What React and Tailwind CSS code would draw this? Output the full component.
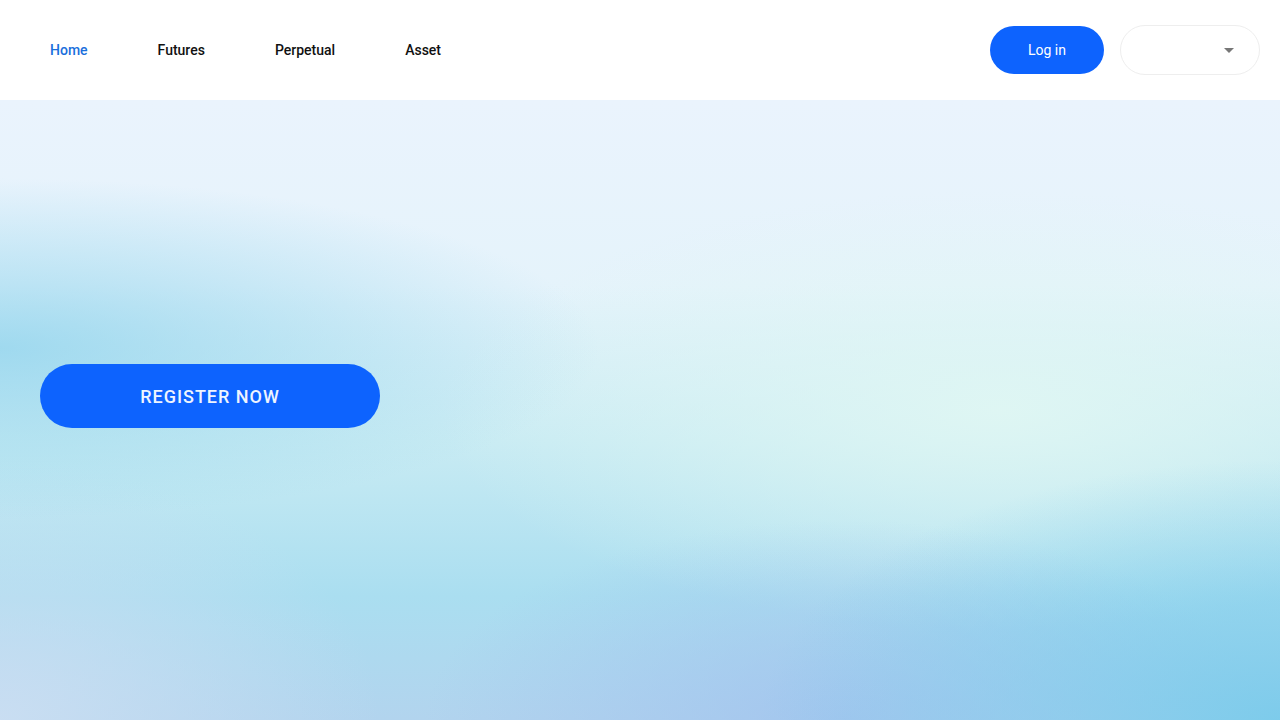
import { useState } from 'react';

const links = ['Home', 'Futures', 'Perpetual', 'Asset'];

export default function App() {
  const [active] = useState('Home');
  return (
    <div className="h-screen flex flex-col font-['Roboto',sans-serif] overflow-hidden">
      <header className="h-[100px] shrink-0 bg-white flex items-center justify-between pl-[50px] pr-5">
        <nav className="flex items-center gap-[70px]">
          {links.map(l => (
            <a key={l} href="#"
              className={`text-[14px] font-medium ${l === active ? 'text-[#1a6fdc]' : 'text-[#111]'}`}>
              {l}
            </a>
          ))}
        </nav>
        <div className="flex items-center gap-4">
          <button className="w-[114px] h-[48px] rounded-full bg-[#0d63fe] text-white text-[14px]">Log in</button>
          <button className="w-[140px] h-[50px] rounded-full border border-[#eeeeee] bg-white flex items-center justify-end pr-[25px]">
            <span className="w-0 h-0 border-l-[5px] border-r-[5px] border-t-[5px] border-l-transparent border-r-transparent border-t-[#777]" />
          </button>
        </div>
      </header>
      <main className="flex-1 pl-10 pt-[264px] bg-[radial-gradient(ellipse_600px_170px_at_0%_40%,rgba(140,210,236,0.75),transparent),radial-gradient(ellipse_520px_260px_at_100%_100%,rgba(122,203,235,0.95),transparent),radial-gradient(ellipse_420px_200px_at_66%_100%,rgba(160,194,238,0.8),transparent),radial-gradient(ellipse_380px_260px_at_0%_100%,rgba(202,222,242,0.95),transparent),radial-gradient(ellipse_560px_220px_at_78%_50%,rgba(224,247,243,0.9),transparent),linear-gradient(180deg,#eaf3fd_0%,#e5f3fb_30%,#c8ebf3_55%,#aadef0_80%,#b2d4ee_100%)]">
        <button className="w-[340px] h-16 rounded-full bg-[#0d63fe] text-[#eef4ff] text-[18px] font-medium tracking-[1px]">
          REGISTER NOW
        </button>
      </main>
    </div>
  );
}
